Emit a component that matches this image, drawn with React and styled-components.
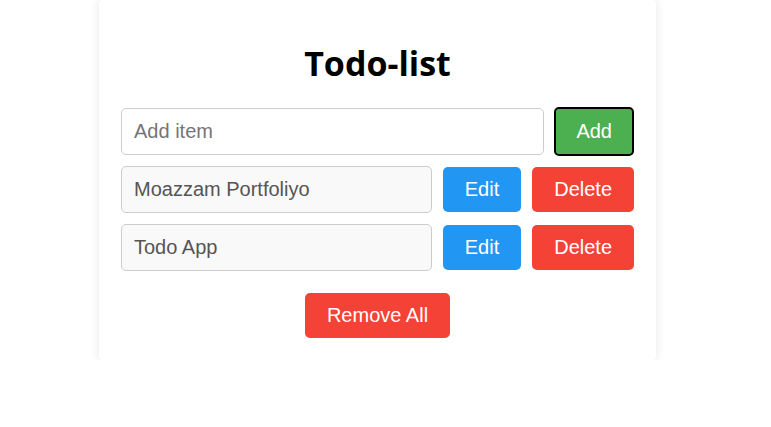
import React, { useState } from "react";
import styled, { createGlobalStyle } from "styled-components";

const GlobalStyle = createGlobalStyle`
  body {
    margin: 0;
    background: #ffffff;
    font-family: "Liberation Sans", Arial, sans-serif;
  }
`;

const Page = styled.div`
  width: 755px;
`;

const Card = styled.div`
  width: 557px;
  box-sizing: border-box;
  margin: 0 auto;
  padding: 40px 22px 22px;
  background: #fff;
  border-radius: 4px;
  box-shadow: 0 0 10px rgba(0, 0, 0, 0.1);
`;

const Title = styled.h1`
  margin: 0 0 21px;
  text-align: center;
  font-family: "Open Sans", "Noto Sans", sans-serif;
  font-size: 34px;
  font-weight: 700;
  line-height: 46px;
  color: #000;
`;

const List = styled.div`
  display: flex;
  flex-direction: column;
  gap: 11px;
`;

const Row = styled.div`
  display: flex;
  align-items: center;
  gap: 11px;
`;

const AddRow = styled(Row)`
  gap: 10px;
  margin-bottom: 10px;
`;

const TextInput = styled.input`
  flex: 1;
  min-width: 0;
  height: 47px;
  box-sizing: border-box;
  padding: 0 12px;
  border: 1px solid #cccccc;
  border-radius: 5px;
  background: ${(p) => (p.readOnly ? "#f9f9f9" : "#fff")};
  font-family: "Liberation Sans", Arial, sans-serif;
  font-size: 20px;
  color: #555;
  outline: none;

  &::placeholder {
    color: #757575;
  }
`;

const Button = styled.button`
  box-sizing: border-box;
  height: ${(p) => (p.$focused ? "49px" : "45px")};
  padding: 0 ${(p) => (p.$focused ? "20px" : "22px")};
  border: ${(p) => (p.$focused ? "2px solid #000" : "none")};
  border-radius: 5px;
  background: ${(p) => p.$color};
  color: #fff;
  font-family: "Liberation Sans", Arial, sans-serif;
  font-size: 20px;
  cursor: pointer;
`;

const Footer = styled.div`
  display: flex;
  justify-content: center;
  margin-top: 22px;
`;

const GREEN = "#4caf50";
const BLUE = "#2196f3";
const RED = "#f44336";

export default function App() {
  const [items] = useState(["Moazzam Portfoliyo", "Todo App"]);

  return (
    <>
      <GlobalStyle />
      <Page>
        <Card>
          <Title>Todo-list</Title>
          <AddRow>
            <TextInput placeholder="Add item" />
            <Button $color={GREEN} $focused>
              Add
            </Button>
          </AddRow>
          <List>
            {items.map((item) => (
              <Row key={item}>
                <TextInput readOnly value={item} />
                <Button $color={BLUE}>Edit</Button>
                <Button $color={RED}>Delete</Button>
              </Row>
            ))}
          </List>
          <Footer>
            <Button $color={RED}>Remove All</Button>
          </Footer>
        </Card>
      </Page>
    </>
  );
}
